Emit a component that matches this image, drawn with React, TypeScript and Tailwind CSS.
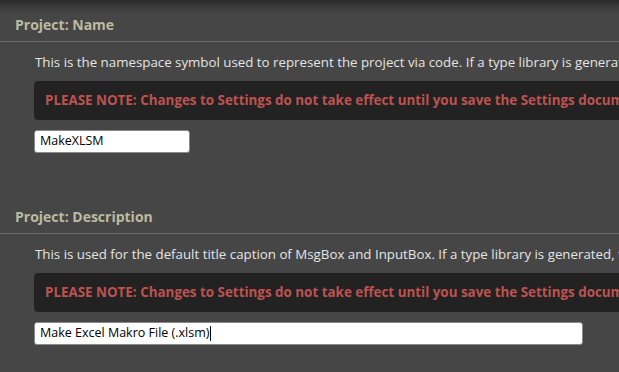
import React from 'react';

/**
 * Project settings panel: two setting sections with heading,
 * description, a note banner and a text field.
 */

const FONT = { fontFamily: '"Open Sans", "Noto Sans", Arial, sans-serif' };

interface SettingProps {
  title: string;
  description: string;
  value: string;
  inputWidth: string;
  caret?: boolean;
  first?: boolean;
}

function Setting({ title, description, value, inputWidth, caret, first }: SettingProps) {
  return (
    <section className={first ? '' : 'mt-[39px]'}>
      <h2 className="border-b border-[#6a6a6a] pl-[15px] pt-[15px] pb-[6px] text-[14px] font-bold leading-[20px] text-[#bcbba0]">
        {title}
      </h2>
      <div className="pl-[34px]">
        <p className="mt-[11px] ml-px whitespace-nowrap text-[13.3px] leading-[18px] text-[#e4e4e4]">
          {description}
        </p>
        <div className="mt-[10px] flex h-[39px] items-center whitespace-nowrap rounded-l-[4px] bg-[#222222] px-[11px] text-[13.4px] font-bold text-[#bd5250]">
          PLEASE NOTE: Changes to Settings do not take effect until you save the Settings document.
        </div>
        <div
          className={`mt-[10px] flex h-[23px] items-center rounded-[3px] border border-[#8a8a8a] bg-white px-[5px] text-[12.5px] text-black ${inputWidth}`}
        >
          <span>{value}</span>
          {caret && <span className="ml-px h-[15px] w-px bg-black" />}
        </div>
      </div>
    </section>
  );
}

export default function App() {
  return (
    <div
      style={FONT}
      className="h-[372px] w-[619px] overflow-hidden bg-[#464646] bg-[linear-gradient(to_bottom,#282828_0px,#3a3a3a_6px,#464646_14px)]"
    >
      <Setting
        first
        title="Project: Name"
        description="This is the namespace symbol used to represent the project via code. If a type library is generated, this is the name used."
        value="MakeXLSM"
        inputWidth="w-[156px]"
      />
      <Setting
        title="Project: Description"
        description="This is used for the default title caption of MsgBox and InputBox. If a type library is generated, this is the description used."
        value="Make Excel Makro File (.xlsm)"
        inputWidth="w-[549px]"
        caret
      />
    </div>
  );
}
